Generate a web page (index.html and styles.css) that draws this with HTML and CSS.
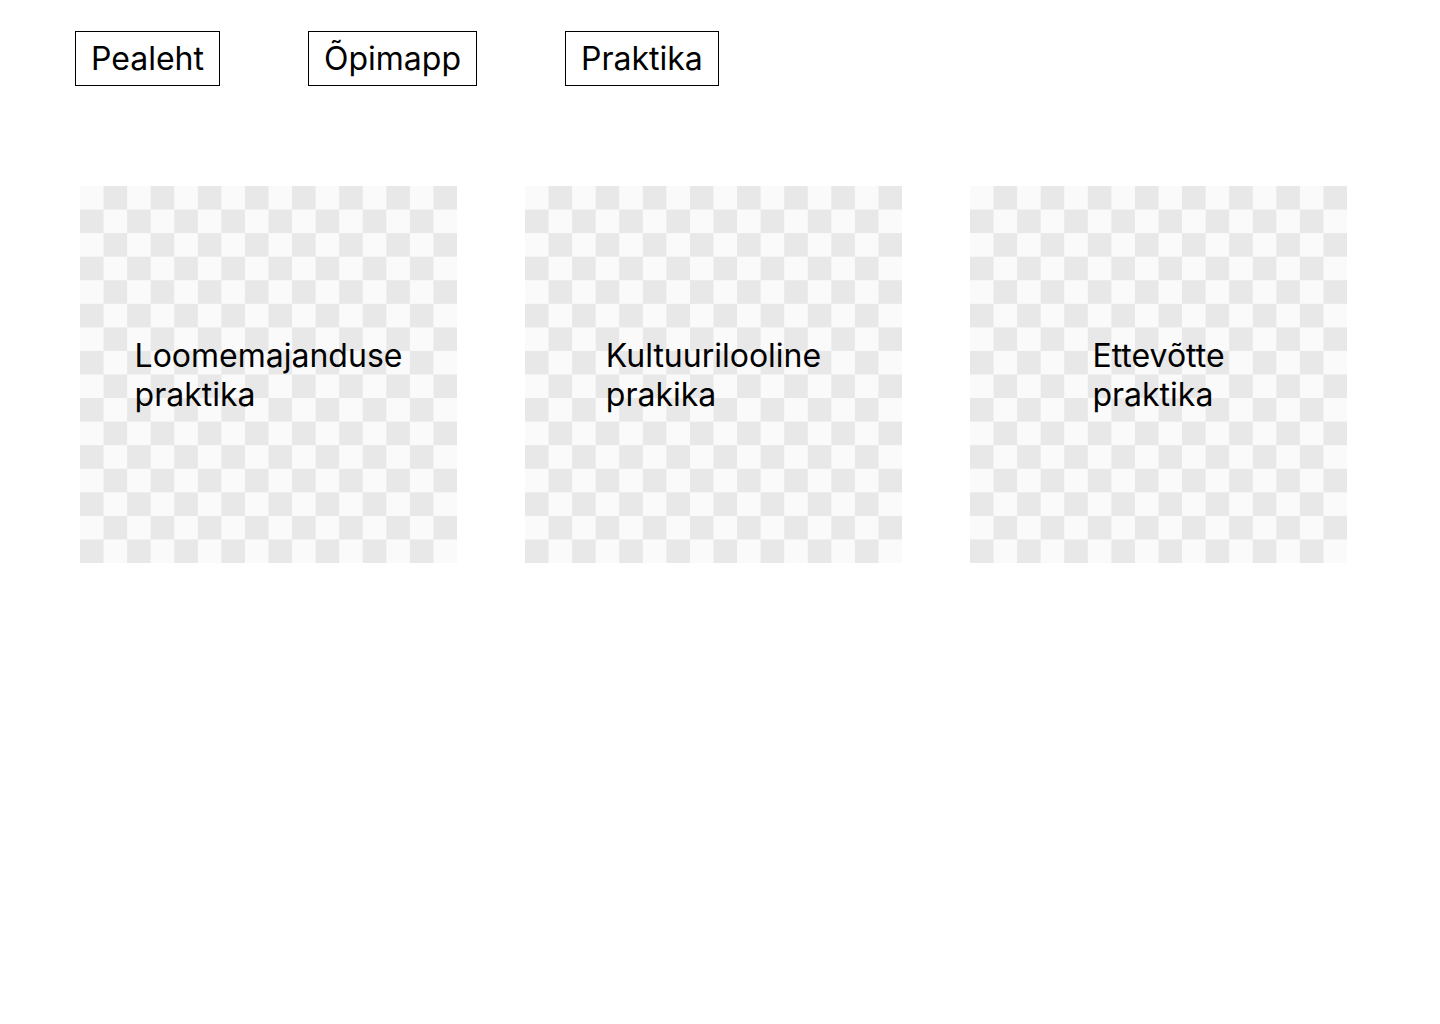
FILE: index.html
```html
<!DOCTYPE html>
<html lang="et">
<head>
<meta charset="utf-8">
<title>Praktika</title>
<link rel="stylesheet" href="styles.css">
</head>
<body>
<nav class="nav">
  <a class="nav-link" href="#">Pealeht</a>
  <a class="nav-link" href="#">Õpimapp</a>
  <a class="nav-link" href="#">Praktika</a>
</nav>
<main class="cards">
  <div class="card"><span class="card-title">Loomemajanduse<br>praktika</span></div>
  <div class="card"><span class="card-title">Kultuurilooline<br>prakika</span></div>
  <div class="card"><span class="card-title">Ettevõtte<br>praktika</span></div>
</main>
</body>
</html>
```
FILE: styles.css
```css
html, body {
  margin: 0;
  padding: 0;
  background: #ffffff;
}
body {
  font-family: Inter, "Noto Sans", sans-serif;
  color: #000000;
}
.nav {
  display: flex;
  gap: 88px;
  padding: 31px 0 0 75px;
}
.nav-link {
  display: block;
  border: 1px solid #000000;
  padding: 7px 15px;
  font-size: 32px;
  line-height: 39px;
  color: #000000;
  text-decoration: none;
}
.cards {
  display: flex;
  gap: 68px;
  padding: 100px 0 0 80px;
}
.card {
  width: 377px;
  height: 377px;
  display: flex;
  align-items: center;
  justify-content: center;
  background-image: conic-gradient(#e8e8e8 0 25%, #fafafa 0 50%, #e8e8e8 0 75%, #fafafa 0 100%);
  background-size: 47.125px 47.125px;
  background-position: 0 0;
}
.card-title {
  font-size: 32px;
  line-height: 39px;
  text-align: left;
}
```
